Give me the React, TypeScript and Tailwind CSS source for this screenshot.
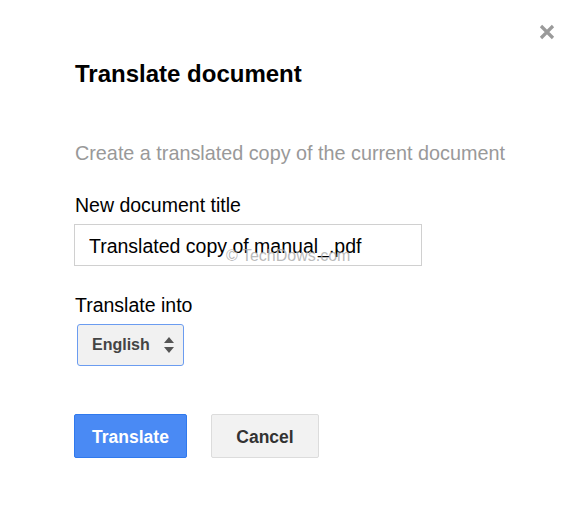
import React from "react";

function CloseIcon() {
  return (
    <svg width="16" height="16" viewBox="0 0 16 16" className="text-[#9a9a9a]">
      <path d="M2 2 L14 14 M14 2 L2 14" stroke="currentColor" strokeWidth="3.2" />
    </svg>
  );
}

function SortArrows() {
  return (
    <svg width="10" height="18" viewBox="0 0 10 18" className="text-[#555]">
      <path d="M5 1 L10 7 L0 7 Z M0 11 L10 11 L5 17 Z" fill="currentColor" />
    </svg>
  );
}

export default function App() {
  return (
    <div
      className="relative w-[581px] h-[515px] bg-white"
      style={{ fontFamily: '"Liberation Sans", Arial, sans-serif' }}
    >
      <button className="absolute right-[26px] top-[24px]">
        <CloseIcon />
      </button>

      <div className="flex flex-col pl-[75px] pt-[60px]">
        <h1 className="text-[24px] leading-[28px] font-bold text-black">
          Translate document
        </h1>

        <p className="mt-[53px] text-[19.8px] leading-[24px] text-[#999]">
          Create a translated copy of the current document
        </p>

        <label className="mt-[28px] text-[19.5px] leading-[24px] text-black">
          New document title
        </label>
        <div className="relative mt-[7px]">
          <input
            defaultValue="Translated copy of manual_.pdf"
            className="w-[348px] h-[42px] -ml-[1px] border border-[#d0d0d0] pl-[14px] pr-[8px] pt-[2px] text-[19.5px] text-black outline-none"
          />
          <span className="pointer-events-none absolute left-[151px] top-[20px] text-[16px] text-[#a8a8a8]/80">
            © TechDows.com
          </span>
        </div>

        <label className="mt-[27px] text-[19.5px] leading-[24px] text-black">
          Translate into
        </label>
        <div className="mt-[7px] ml-[2px] flex h-[42px] w-[107px] items-center justify-between rounded-[3px] border border-[#6b9cf0] bg-[#f1f1f1] pl-[14px] pr-[9px]">
          <span className="text-[16px] font-bold text-[#444]">English</span>
          <SortArrows />
        </div>

        <div className="mt-[48px] -ml-[1px] flex gap-[24px]">
          <button className="h-[44px] w-[113px] rounded-[2px] border border-[#3079ed] bg-[#4a8af4] pt-[3px] text-[17.5px] font-bold text-white">
            Translate
          </button>
          <button className="h-[44px] w-[108px] rounded-[2px] border border-[#dcdcdc] bg-[#f2f2f2] pt-[3px] text-[17.5px] font-bold text-[#333]">
            Cancel
          </button>
        </div>
      </div>
    </div>
  );
}
